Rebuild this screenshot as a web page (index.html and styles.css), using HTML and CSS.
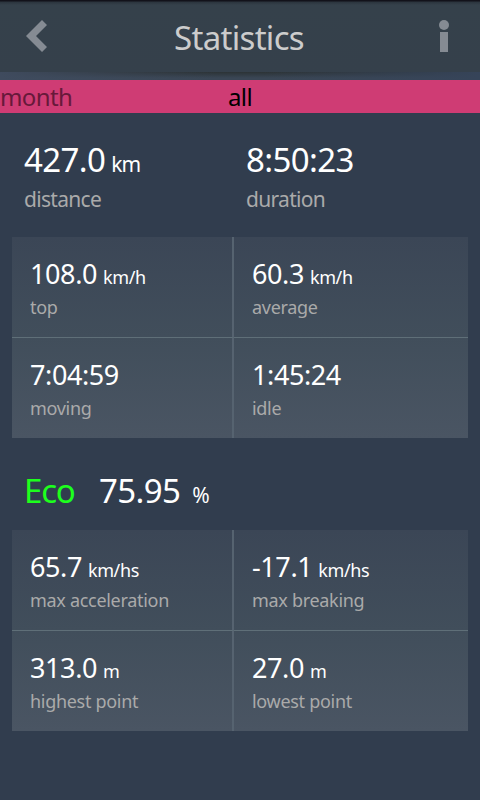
FILE: index.html
```html
<!DOCTYPE html>
<html lang="en">
<head>
    <meta charset="UTF-8">
    <meta name="viewport" content="width=device-width, initial-scale=1.0">
    <title>Statistics</title>
    <link rel="stylesheet" href="styles.css">
</head>
<body>
    <header class="header">
        <svg class="back" width="22" height="32" viewBox="0 0 22 32"><path d="M16 0 L21 5 L10 16 L21 27 L16 32 L0 16 Z" fill="#858b93"/></svg>
        <h1>Statistics</h1>
        <svg class="info" width="10" height="32" viewBox="0 0 10 32" fill="#858b93"><circle cx="5" cy="5" r="5"/><rect x="1" y="12" width="8" height="20"/></svg>
    </header>
    <div class="shadow"></div>
    <nav class="tabs">
        <span class="tab">month</span>
        <span class="tab active">all</span>
    </nav>
    <main>
        <div class="summary">
            <div class="total">
                <div class="value">427.0 <small>km</small></div>
                <div class="label">distance</div>
            </div>
            <div class="total">
                <div class="value">8:50:23</div>
                <div class="label">duration</div>
            </div>
        </div>
        <div class="grid">
            <div class="cell">
                <div class="value">108.0 <small>km/h</small></div>
                <div class="label">top</div>
            </div>
            <div class="cell">
                <div class="value">60.3 <small>km/h</small></div>
                <div class="label">average</div>
            </div>
            <div class="cell">
                <div class="value">7:04:59</div>
                <div class="label">moving</div>
            </div>
            <div class="cell">
                <div class="value">1:45:24</div>
                <div class="label">idle</div>
            </div>
        </div>
        <div class="eco">
            <span class="eco-name">Eco</span>
            <span class="eco-value">75.95</span>
            <span class="eco-unit">%</span>
        </div>
        <div class="grid">
            <div class="cell">
                <div class="value">65.7 <small>km/hs</small></div>
                <div class="label">max acceleration</div>
            </div>
            <div class="cell">
                <div class="value">-17.1 <small>km/hs</small></div>
                <div class="label">max breaking</div>
            </div>
            <div class="cell">
                <div class="value">313.0 <small>m</small></div>
                <div class="label">highest point</div>
            </div>
            <div class="cell">
                <div class="value">27.0 <small>m</small></div>
                <div class="label">lowest point</div>
            </div>
        </div>
    </main>
</body>
</html>
```
FILE: styles.css
```css
* {
    box-sizing: border-box;
}
body {
    margin: 0;
    height: 800px;
    overflow: hidden;
    background-color: #313d4e;
    color: #fff;
    font-family: "Noto Sans", sans-serif;
}
.header {
    display: flex;
    justify-content: space-between;
    align-items: center;
    height: 72px;
    padding: 0 31px 0 26px;
    background: linear-gradient(#12121a 0, #12121a 1px, #2b343d 2px, #35414b 5px, #35404b 72px);
}
h1 {
    margin: 2px 9px 0 0;
    font-size: 33px;
    font-weight: normal;
    letter-spacing: -0.7px;
    color: #ccc;
}
.shadow {
    height: 8px;
    background:
        linear-gradient(90deg, #3f4b5e, transparent 45%, transparent 55%, #364459),
        linear-gradient(#2c3336, #3a4655 6px);
}
.tabs {
    display: flex;
    height: 33px;
    background-color: #cf3c74;
    font-size: 24px;
    line-height: 34px;
    letter-spacing: -0.6px;
}
.tab {
    width: 228px;
    color: #67193a;
}
.tab.active {
    color: #000;
}
main {
    padding: 0 12px;
}
.summary {
    display: grid;
    grid-template-columns: 222px 1fr;
    height: 124px;
    padding: 24px 12px 0;
}
.value {
    display: flex;
    align-items: baseline;
    gap: 6px;
}
.summary .value {
    height: 46px;
    font-size: 33px;
    line-height: 46px;
    letter-spacing: -0.6px;
}
.summary .label {
    font-size: 21px;
    line-height: 32px;
    letter-spacing: -0.7px;
}
.summary small {
    font-size: 21px;
    letter-spacing: -1px;
}
.label {
    color: #aaa;
}
.grid {
    display: grid;
    grid-template-columns: 222px 1fr;
    grid-template-rows: 101px 100px;
    background: linear-gradient(#3b4656, #414e5b 50%, #4a5563);
}
.cell {
    padding: 18px 18px 0;
}
.cell:nth-child(odd) {
    border-right: 2px solid #566370;
}
.cell:nth-child(-n+2) {
    border-bottom: 1px solid #5f6f78;
}
.cell .value {
    height: 38px;
    font-size: 27px;
    line-height: 38px;
    letter-spacing: -0.4px;
}
.cell small {
    font-size: 18px;
    letter-spacing: -0.4px;
}
.cell .label {
    font-size: 18px;
    line-height: 28px;
    letter-spacing: -0.3px;
}
.eco {
    display: flex;
    align-items: baseline;
    height: 92px;
    padding: 30px 12px 0;
    font-size: 33px;
    line-height: 46px;
    letter-spacing: -0.6px;
}
.eco-name {
    width: 75px;
    letter-spacing: -1.2px;
    color: #1dff1d;
}
.eco-unit {
    margin-left: 12px;
    font-size: 21px;
}
```
